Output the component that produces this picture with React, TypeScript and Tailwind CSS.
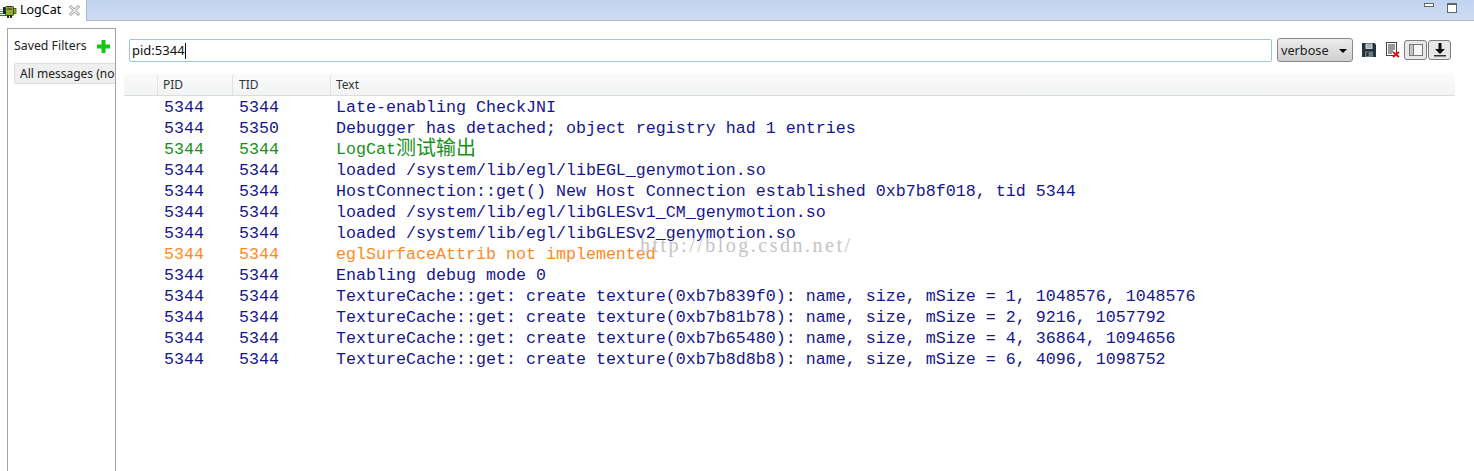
const rows = [
  ['5344', '5344', 'Late-enabling CheckJNI', 'b'],
  ['5344', '5350', 'Debugger has detached; object registry had 1 entries', 'b'],
  ['5344', '5344', 'LogCat', 'g'],
  ['5344', '5344', 'loaded /system/lib/egl/libEGL_genymotion.so', 'b'],
  ['5344', '5344', 'HostConnection::get() New Host Connection established 0xb7b8f018, tid 5344', 'b'],
  ['5344', '5344', 'loaded /system/lib/egl/libGLESv1_CM_genymotion.so', 'b'],
  ['5344', '5344', 'loaded /system/lib/egl/libGLESv2_genymotion.so', 'b'],
  ['5344', '5344', 'eglSurfaceAttrib not implemented', 'o'],
  ['5344', '5344', 'Enabling debug mode 0', 'b'],
  ['5344', '5344', 'TextureCache::get: create texture(0xb7b839f0): name, size, mSize = 1, 1048576, 1048576', 'b'],
  ['5344', '5344', 'TextureCache::get: create texture(0xb7b81b78): name, size, mSize = 2, 9216, 1057792', 'b'],
  ['5344', '5344', 'TextureCache::get: create texture(0xb7b65480): name, size, mSize = 4, 36864, 1094656', 'b'],
  ['5344', '5344', 'TextureCache::get: create texture(0xb7b8d8b8): name, size, mSize = 6, 4096, 1098752', 'b'],
]

function rowColor(c: string) {
  if (c === 'g') return 'text-[#1a8f1a]'
  if (c === 'o') return 'text-[#ff8a1f]'
  return 'text-[#16168c]'
}

function AndroidIcon() {
  return (
    <svg width="17" height="14" viewBox="0 0 17 14" className="shrink-0">
      <path d="M0 5.5h6" stroke="#e8d020" />
      <path d="M0 7.5h6" stroke="#e03030" />
      <path d="M0 9.5h6" stroke="#e03090" />
      <path d="M0 11.5h6" stroke="#3050e0" />
      <rect x="3" y="3" width="2" height="7" fill="#222" />
      <rect x="5.5" y="2.5" width="8" height="9" rx="1" fill="#8fae2c" stroke="#2a3410" />
      <rect x="13.5" y="4.5" width="2.5" height="5" fill="#8fae2c" stroke="#2a3410" strokeWidth="0.7" />
      <path d="M7 5h5" stroke="#2a3410" />
      <path d="M8 12v2M11 12v2" stroke="#2a3410" strokeWidth="2" />
    </svg>
  )
}

function CloseIcon() {
  return (
    <svg width="11" height="11" viewBox="0 0 11 11" className="shrink-0">
      <path d="M0.5 2L2 0.5 5.5 4 9 0.5 10.5 2 7 5.5 10.5 9 9 10.5 5.5 7 2 10.5 0.5 9 4 5.5z" fill="#f4f4f4" stroke="#8c8c8c" />
    </svg>
  )
}

function SaveIcon() {
  return (
    <svg width="14" height="14" viewBox="0 0 14 14" className="block">
      <path d="M0 0h12.5l1.5 1.5V14H0z" fill="#26323c" />
      <rect x="3.5" y="0.5" width="7" height="5.5" fill="#c9ced2" />
      <path d="M5 2h4M5 4h4" stroke="#8a949c" />
      <rect x="3" y="8.5" width="8" height="5.5" fill="#6c7a85" />
      <rect x="4.5" y="9.5" width="2" height="3.5" fill="#1d2830" />
    </svg>
  )
}

function ClearIcon() {
  return (
    <svg width="14" height="16" viewBox="0 0 14 16" className="block">
      <rect x="0.5" y="0.5" width="10" height="13" fill="#fff" stroke="#444" />
      <path d="M2 3h7M2 5h7M2 7h7M2 9h5M2 11h4" stroke="#333" />
      <path d="M7 10l6 5M13 10l-6 5" stroke="#e01010" strokeWidth="2" />
    </svg>
  )
}

function ToggleButton({ children }: { children: React.ReactNode }) {
  return (
    <div className="w-[23px] h-[20px] rounded-[3px] border border-[#7f7f7f] bg-[#e8e8e8] flex items-center justify-center">
      {children}
    </div>
  )
}

export default function App() {
  return (
    <div className="w-[1474px] h-[471px] overflow-hidden bg-white relative font-['Liberation_Sans',sans-serif] flex flex-col">
      <div className="h-[21px] flex bg-gradient-to-b from-[#c0d4f0] to-[#cfdcf2] border-b border-[#a9b7cf] shrink-0">
        <div className="w-[87px] h-[21px] bg-white border-r border-[#a9b7cf] flex items-center">
          <AndroidIcon />
          <span className="ml-[3px] text-[12.5px] text-black font-['Noto_Sans',sans-serif]">LogCat</span>
          <span className="ml-[8px]"><CloseIcon /></span>
        </div>
        <div className="flex-1 flex justify-end items-start pt-[3px] pr-[17px] gap-[13px]">
          <div className="w-[10px] h-[4px] bg-white border border-[#666]" />
          <div className="w-[10px] h-[10px] bg-white border border-[#666] border-t-2" />
        </div>
      </div>

      <div className="flex-1 flex pt-[7px] pl-[7px]">
        <div className="w-[109px] h-[443px] border-l border-t border-r border-[#a4a4a4] shrink-0 overflow-hidden">
          <div className="flex items-center pl-[6px] pt-[7px] h-[27px]">
            <span className="text-[12.3px] text-[#222] font-['Noto_Sans',sans-serif]">Saved Filters</span>
            <svg width="13" height="13" viewBox="0 0 13 13" className="ml-[10px] shrink-0">
              <path d="M4.5 0h4v4.5H13v4H8.5V13h-4V8.5H0v-4h4.5z" fill="#12c812" />
            </svg>
          </div>
          <div className="mt-[7px] ml-[6px] h-[21px] w-[110px] bg-[#efefef] border border-[#dddddd] rounded-[2px] pl-[5px] flex items-center whitespace-nowrap text-[12px] text-[#222] font-['Noto_Sans',sans-serif]">
            All messages (no filters)
          </div>
        </div>

        <div className="flex-1 pl-[8px] pr-[19px] flex flex-col">
          <div className="flex items-start pt-[10px] pl-[5px]">
            <div className="mt-[1px] w-[1143px] h-[23px] border border-[#a3c2dc] rounded-[2px] flex items-center pl-[2px] text-[13px] text-[#111] font-['Noto_Sans',sans-serif]">
              pid:5344<span className="w-px h-[16px] bg-black" />
            </div>
            <div className="ml-[5px] w-[76px] h-[24px] pt-[1px] border border-[#8a8a8a] rounded-[3px] bg-gradient-to-b from-[#ececec] to-[#cfcfcf] flex items-center justify-between pl-[3px] pr-[5px] text-[12.7px] text-[#222] font-['Noto_Sans',sans-serif]">
              verbose
              <span className="w-0 h-0 border-l-[4px] border-r-[4px] border-t-[4px] border-l-transparent border-r-transparent border-t-black" />
            </div>
            <div className="ml-[9px] mt-[5px]"><SaveIcon /></div>
            <div className="ml-[10px] mt-[4px]"><ClearIcon /></div>
            <div className="ml-[4px] mt-[2px] flex gap-px">
              <ToggleButton>
                <svg width="14" height="12" viewBox="0 0 14 12">
                  <rect x="0.5" y="0.5" width="13" height="11" fill="#f6f6f6" stroke="#777" />
                  <rect x="1" y="1" width="3" height="10" fill="#c4c4c4" />
                  <path d="M4.5 1v10" stroke="#777" />
                </svg>
              </ToggleButton>
              <ToggleButton>
                <svg width="14" height="14" viewBox="0 0 14 14">
                  <path d="M5.5 0h3v6H12L7 11 2 6h3.5z" fill="#111" />
                  <rect x="1" y="12" width="12" height="1.5" fill="#333" />
                </svg>
              </ToggleButton>
            </div>
          </div>

          <div className="mt-[11px] w-[1331px] h-[23px] pt-[2px] flex bg-gradient-to-b from-[#fbfbfb] to-[#f2f3f4] border-b border-[#dcdcdc] text-[12px] text-[#333] font-['Noto_Sans',sans-serif]">
            <div className="w-[33px]" />
            <div className="w-[75px] pl-[5px] border-l border-[#e2e2e2] flex items-center">PID</div>
            <div className="w-[98px] pl-[6px] border-l border-[#e2e2e2] flex items-center">TID</div>
            <div className="flex-1 pl-[5px] border-l border-[#e2e2e2] flex items-center">Text</div>
          </div>

          <div className="mt-[1px] font-['Liberation_Mono','Noto_Sans_CJK_SC',monospace] text-[16.67px]">
            {rows.map((r, i) => (
              <div key={i} className={`h-[21px] flex items-center whitespace-pre ${rowColor(r[3])}`}>
                <div className="w-[75px] ml-[40px]">{r[0]}</div>
                <div className="w-[97px]">{r[1]}</div>
                <div>
                  {r[2]}
                  {r[2] === 'LogCat' && <span className="text-[20px] leading-none align-[-1px]">测试输出</span>}
                </div>
              </div>
            ))}
          </div>
        </div>
      </div>

      <div className="absolute left-[640px] top-[230px] text-[20px] tracking-[2.5px] text-[#c4c4c4] font-['Liberation_Serif',serif] pointer-events-none">
        http://blog.csdn.net/
      </div>
    </div>
  )
}
